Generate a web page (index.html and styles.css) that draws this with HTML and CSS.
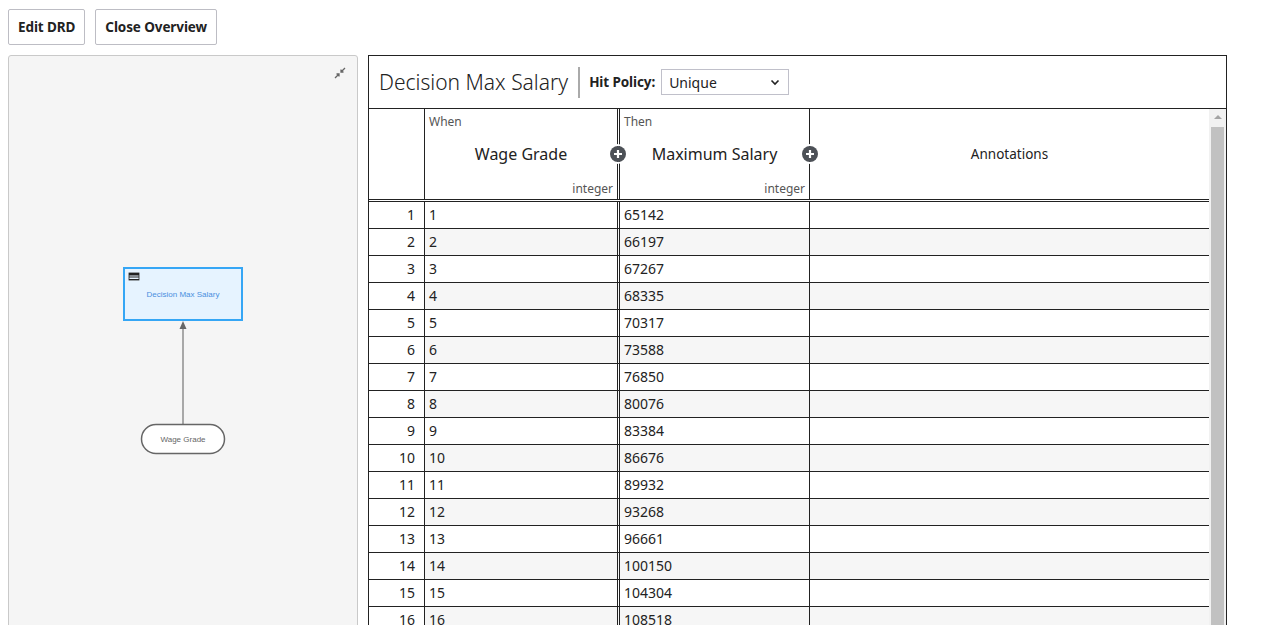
FILE: index.html
```html
<!DOCTYPE html>
<html>
<head>
<meta charset="utf-8">
<link rel="stylesheet" href="styles.css">
</head>
<body>
<div class="toolbar">
  <button class="btn">Edit DRD</button>
  <button class="btn">Close Overview</button>
</div>
<div class="main">
  <div class="drd">
    <svg class="collapse" width="14" height="14" viewBox="0 0 14 14">
      <path d="M2 12 L6 8 M3.5 8 L6 8 L6 10.5" stroke="#666" stroke-width="1.3" fill="none"/>
      <path d="M12 2 L8 6 M10.5 6 L8 6 L8 3.5" stroke="#666" stroke-width="1.3" fill="none"/>
    </svg>
    <svg class="canvas" width="348" height="560" viewBox="0 0 348 560">
      <line x1="174" y1="272" x2="174" y2="368" stroke="#a8a8a8" stroke-width="2"/>
      <polygon points="174,265 170.5,273 177.5,273" fill="#666"/>
      <rect x="115" y="212" width="118" height="52" fill="#e6f3ff" stroke="#35a6f5" stroke-width="2"/>
      <rect x="120" y="217" width="10" height="2.5" fill="#222"/>
      <rect x="120" y="220.5" width="10" height="1" fill="#222"/>
      <rect x="120" y="223" width="10" height="1" fill="#222"/>
      <rect x="120" y="217" width="10" height="7" fill="none" stroke="#222" stroke-width="0.8"/>
      <text x="174" y="241" class="dec-label" text-anchor="middle">Decision Max Salary</text>
      <rect x="132.5" y="368.5" width="83" height="29" rx="14.5" fill="#fff" stroke="#666" stroke-width="1.5"/>
      <text x="174" y="386" class="inp-label" text-anchor="middle">Wage Grade</text>
    </svg>
  </div>
  <div class="editor">
    <div class="ed-header">
      <h1 class="title">Decision Max Salary</h1>
      <span class="sep"></span>
      <label class="hp-label">Hit Policy:</label>
      <div class="select-wrap">
        <select class="select"><option>Unique</option></select>
        <svg class="chev" width="10" height="7" viewBox="0 0 10 7"><path d="M1.5 1.5 L5 5 L8.5 1.5" stroke="#222" stroke-width="1.6" fill="none"/></svg>
      </div>
    </div>
    <div class="ed-body">
      <div class="table">
        <div class="row head">
          <div class="cell idx"></div>
          <div class="cell hcell dbl">
            <span class="kind">When</span>
            <span class="hname">Wage Grade</span>
            <span class="htype">integer</span>
            <span class="plus"><svg width="16" height="16" viewBox="0 0 16 16"><circle cx="8" cy="8" r="8" fill="#4d5157"/><path d="M8 4 V12 M4 8 H12" stroke="#fff" stroke-width="2.2"/></svg></span>
          </div>
          <div class="cell hcell">
            <span class="kind">Then</span>
            <span class="hname">Maximum Salary</span>
            <span class="htype">integer</span>
            <span class="plus"><svg width="16" height="16" viewBox="0 0 16 16"><circle cx="8" cy="8" r="8" fill="#4d5157"/><path d="M8 4 V12 M4 8 H12" stroke="#fff" stroke-width="2.2"/></svg></span>
          </div>
          <div class="cell hcell ann">
            <span class="hname">Annotations</span>
          </div>
        </div>
        <div class="row"><div class="cell idx">1</div><div class="cell dbl">1</div><div class="cell">65142</div><div class="cell ann"></div></div>
        <div class="row alt"><div class="cell idx">2</div><div class="cell dbl">2</div><div class="cell">66197</div><div class="cell ann"></div></div>
        <div class="row"><div class="cell idx">3</div><div class="cell dbl">3</div><div class="cell">67267</div><div class="cell ann"></div></div>
        <div class="row alt"><div class="cell idx">4</div><div class="cell dbl">4</div><div class="cell">68335</div><div class="cell ann"></div></div>
        <div class="row"><div class="cell idx">5</div><div class="cell dbl">5</div><div class="cell">70317</div><div class="cell ann"></div></div>
        <div class="row alt"><div class="cell idx">6</div><div class="cell dbl">6</div><div class="cell">73588</div><div class="cell ann"></div></div>
        <div class="row"><div class="cell idx">7</div><div class="cell dbl">7</div><div class="cell">76850</div><div class="cell ann"></div></div>
        <div class="row alt"><div class="cell idx">8</div><div class="cell dbl">8</div><div class="cell">80076</div><div class="cell ann"></div></div>
        <div class="row"><div class="cell idx">9</div><div class="cell dbl">9</div><div class="cell">83384</div><div class="cell ann"></div></div>
        <div class="row alt"><div class="cell idx">10</div><div class="cell dbl">10</div><div class="cell">86676</div><div class="cell ann"></div></div>
        <div class="row"><div class="cell idx">11</div><div class="cell dbl">11</div><div class="cell">89932</div><div class="cell ann"></div></div>
        <div class="row alt"><div class="cell idx">12</div><div class="cell dbl">12</div><div class="cell">93268</div><div class="cell ann"></div></div>
        <div class="row"><div class="cell idx">13</div><div class="cell dbl">13</div><div class="cell">96661</div><div class="cell ann"></div></div>
        <div class="row alt"><div class="cell idx">14</div><div class="cell dbl">14</div><div class="cell">100150</div><div class="cell ann"></div></div>
        <div class="row"><div class="cell idx">15</div><div class="cell dbl">15</div><div class="cell">104304</div><div class="cell ann"></div></div>
        <div class="row alt"><div class="cell idx">16</div><div class="cell dbl">16</div><div class="cell">108518</div><div class="cell ann"></div></div>
      </div>
      <div class="scrollbar">
        <span class="sb-up"></span>
        <span class="sb-thumb"></span>
      </div>
    </div>
  </div>
</div>
</body>
</html>
```

FILE: styles.css
```css
* { box-sizing: border-box; }

body {
  margin: 8px;
  font-family: "Noto Sans", "Open Sans", Arial, sans-serif;
  color: #222;
  background: #fff;
}

.toolbar {
  display: flex;
  gap: 10px;
  margin-top: 1px;
  margin-bottom: 10px;
}

.btn {
  height: 36px;
  padding: 0 9px;
  border: 1px solid #bdbdc4;
  border-radius: 2px;
  background: #fff;
  font-family: inherit;
  font-size: 13.5px;
  font-weight: 700;
  letter-spacing: -0.1px;
  color: #222;
}

.main {
  display: flex;
  gap: 10px;
  align-items: stretch;
}

.drd {
  position: relative;
  width: 350px;
  flex: none;
  background: #f5f5f5;
  border: 1px solid #c9c9c9;
  border-radius: 3px;
}

.collapse {
  position: absolute;
  top: 10px;
  right: 10px;
}

.canvas { display: block; }

.dec-label {
  font-family: "Liberation Sans", Arial, sans-serif;
  font-size: 8px;
  fill: #4a8fe0;
}

.inp-label {
  font-family: "Liberation Sans", Arial, sans-serif;
  font-size: 8px;
  fill: #666;
}

.editor {
  width: 859px;
  flex: none;
  border: 1px solid #222;
}

.ed-header {
  height: 53px;
  display: flex;
  align-items: center;
  padding-left: 10px;
  border-bottom: 1px solid #222;
}

.title {
  margin: 0;
  font-size: 21px;
  font-weight: 300;
  color: #222;
}

.sep {
  width: 2px;
  height: 31px;
  background: #aaa;
  margin: 0 9px 0 10px;
}

.hp-label {
  font-size: 13.5px;
  font-weight: 700;
  letter-spacing: -0.1px;
  margin-right: 6px;
}

.select-wrap {
  position: relative;
  width: 128px;
  height: 26px;
}

.select {
  appearance: none;
  -webkit-appearance: none;
  width: 100%;
  height: 100%;
  border: 1px solid #c0c0ca;
  border-radius: 0;
  background: #fff;
  padding: 0 0 0 7px;
  font-family: inherit;
  font-size: 14px;
  color: #222;
}

.chev {
  position: absolute;
  right: 9px;
  top: 10px;
  pointer-events: none;
}

.ed-body {
  display: flex;
}

.table {
  width: 840px;
  flex: none;
}

.row {
  display: grid;
  grid-template-columns: 56px 195px 190px 399px;
  height: 27px;
  border-bottom: 1px solid #222;
  font-size: 14px;
}

.row.head {
  height: 93px;
  border-bottom: 3px double #222;
}

.cell {
  border-right: 1px solid #222;
  padding-left: 4px;
  line-height: 26px;
  white-space: nowrap;
}

.cell.dbl { border-right: 3px double #222; }
.cell.ann { border-right: none; }

.cell.idx {
  text-align: right;
  padding-right: 9px;
  background: #fff;
}

.row.alt .cell { background: #f6f6f6; }
.row.alt .cell.idx { background: #fff; }

.hcell {
  position: relative;
  display: flex;
  flex-direction: column;
  line-height: normal;
  padding: 4px 4px 2px 4px;
}

.kind {
  font-size: 12px;
  color: #555;
  height: 15px;
}

.hname {
  flex: 1;
  display: flex;
  align-items: center;
  justify-content: center;
  font-size: 16px;
  color: #222;
}

.ann .hname {
  font-size: 13.5px;
  padding-bottom: 2px;
}

.htype {
  text-align: right;
  font-size: 12px;
  color: #555;
}

.plus {
  position: absolute;
  top: 37px;
  right: -9px;
  width: 16px;
  height: 16px;
  border-radius: 50%;
  box-shadow: 0 0 0 2px #fff;
  z-index: 2;
  display: flex;
}

.scrollbar {
  width: 17px;
  flex: none;
  background: #f1f1f1;
  display: flex;
  flex-direction: column;
  align-items: center;
}

.sb-up {
  width: 0;
  height: 0;
  margin-top: 6px;
  border-left: 4px solid transparent;
  border-right: 4px solid transparent;
  border-bottom: 4px solid #a3a3a3;
}

.sb-thumb {
  margin-top: 8px;
  width: 13px;
  flex: 1;
  background: #c1c1c1;
}
```
